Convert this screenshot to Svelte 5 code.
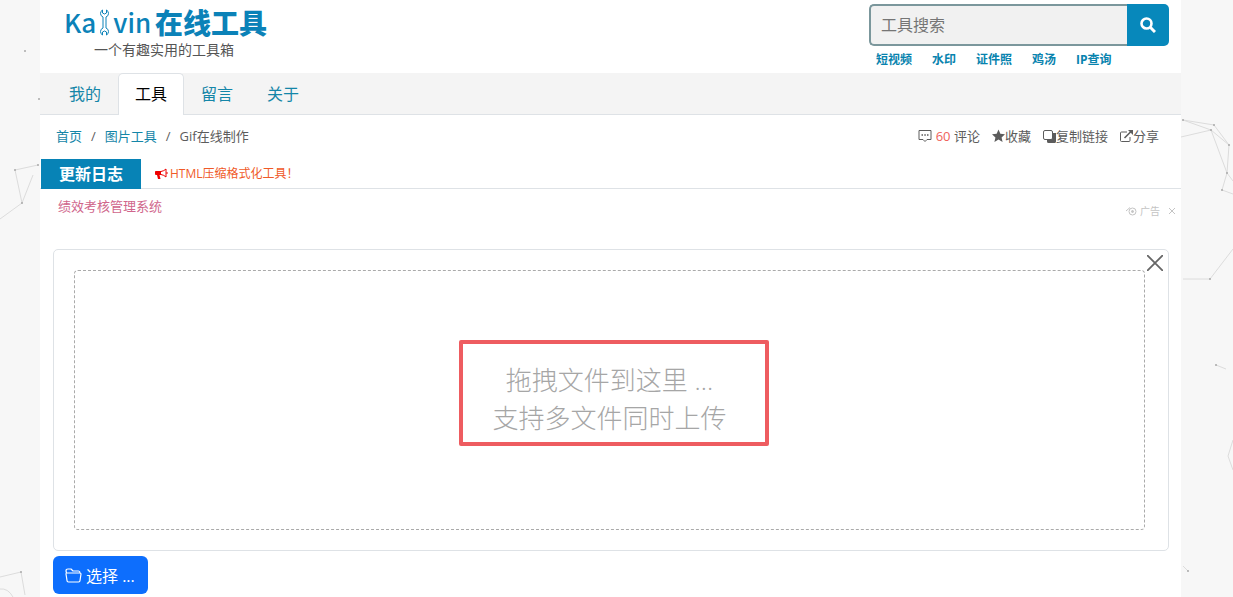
<script>
  let keyword = $state('');
  let active = $state('工具');

  const tabs = ['我的', '工具', '留言', '关于'];
  const hotLinks = ['短视频', '水印', '证件照', '鸡汤', 'IP查询'];
  const crumbs = ['首页', '图片工具'];
</script>

<svg class="particles left" width="40" height="597" viewBox="0 0 40 597" aria-hidden="true">
  <path d="M15 170L38 165M15 170L22 203L33 175M22 203L0 219M0 577L21 572L25 595M0 589Q8 588 13 597" />
  <circle cx="25" cy="51" r="1" />
  <circle cx="39" cy="99" r="1" />
  <circle cx="15" cy="170" r="1" />
  <circle cx="38" cy="165" r="1" />
  <circle cx="22" cy="203" r="1" />
  <circle cx="21" cy="572" r="1" />
</svg>
<svg class="particles right" width="52" height="597" viewBox="0 0 52 597" aria-hidden="true">
  <path d="M2 120L33 125L48 145L46 173L41 190L52 194M2 120L30 130L48 145M30 130L46 173M30 130L0 137M46 173L52 181M2 279L29 279L52 249M35 365L45 369M52 440L47 456L52 470M2 566L7 571" />
  <circle cx="2" cy="120" r="1" />
  <circle cx="33" cy="125" r="1" />
  <circle cx="30" cy="130" r="1" />
  <circle cx="48" cy="145" r="1" />
  <circle cx="46" cy="173" r="1" />
  <circle cx="41" cy="190" r="1" />
  <circle cx="29" cy="279" r="1" />
  <circle cx="35" cy="365" r="1" />
  <circle cx="7" cy="571" r="1" />
</svg>

<div class="page">
  <header>
    <a class="brand" href="#home">
      <span class="logo">
        <span class="latin">Ka</span>
        <svg width="9" height="27" viewBox="0 0 9 27">
          <path
            d="M2.500 1Q.5 2 .5 4.500Q.5 7 3 8V19Q.5 20 .5 22.500Q.5 25 2.500 26V23L4.500 22L6.500 23V26Q8.500 25 8.500 22.500Q8.500 20 6 19V8Q8.500 7 8.500 4.500Q8.500 2 6.500 1V4L4.500 5L2.500 4Z"
            fill="none"
            stroke="currentColor" />
        </svg>
        <span class="latin">vin</span>
        <span class="han">在线工具</span>
      </span>
      <span class="slogan">一个有趣实用的工具箱</span>
    </a>
    <div class="search">
      <form onsubmit={(e) => e.preventDefault()}>
        <input type="text" placeholder="工具搜索" aria-label="工具搜索" bind:value={keyword} />
        <button aria-label="搜索">
          <svg width="16" height="16" viewBox="0 0 16 16" fill="none" stroke="currentColor">
            <circle cx="6.5" cy="6.5" r="5" stroke-width="2.6" />
            <path d="M10.5 10.5L15 15" stroke-width="3" />
          </svg>
        </button>
      </form>
      <div class="hot">
        {#each hotLinks as link}
          <a href="#hot">{link}</a>
        {/each}
      </div>
    </div>
  </header>

  <nav>
    {#each tabs as tab}
      <a href="#tab" class:active={tab === active} onclick={() => (active = tab)}>{tab}</a>
    {/each}
  </nav>

  <div class="crumb-row">
    <div class="crumbs">
      {#each crumbs as crumb}
        <a href="#crumb">{crumb}</a>
        <span>/</span>
      {/each}
      <span>Gif在线制作</span>
    </div>
    <div class="actions">
      <a href="#comment">
        <svg width="14" height="14" viewBox="0 0 14 14" fill="none" stroke="currentColor">
          <path d="M1 1.5H13V10.5H9L7 12.5L5 10.5H1Z" />
          <path d="M3.5 6H5M6.3 6H7.8M9 6H10.5" stroke-width="1.4" />
        </svg>
        <span class="comment"><b>60</b> 评论</span>
      </a>
      <a href="#star">
        <svg width="13" height="14" viewBox="0 0 14 14" fill="currentColor">
          <path d="M7 0L9 4.7L14 5.2L10.3 8.5L11.4 13.5L7 10.9L2.6 13.5L3.700 8.5L0 5.2L5 4.7Z" />
        </svg>收藏
      </a>
      <a href="#copy">
        <svg width="13" height="14" viewBox="0 0 13 14">
          <path d="M4 9H9V4H13V12.500Q13 14 11.500 14H5.500Q4 14 4 12.500Z" fill="currentColor" />
          <rect x=".5" y="1.5" width="9" height="9" rx="1.5" fill="#fff" stroke="currentColor" />
        </svg>复制链接
      </a>
      <a href="#share">
        <svg width="13" height="14" viewBox="0 0 13 14" fill="none" stroke="currentColor">
          <path d="M7 3H1.5Q.5 3 .5 4V11.5Q.5 12.5 1.5 12.5H9Q10 12.5 10 11.5V8" />
          <path d="M4.5 9L11 2.5" stroke-width="1.6" />
          <path d="M8 1H13V6Z" fill="currentColor" stroke="none" />
        </svg>分享
      </a>
    </div>
  </div>

  <div class="news">
    <strong>更新日志</strong>
    <a href="#news">
      <svg width="13" height="12" viewBox="0 0 13 12">
        <path d="M0 3.500Q0 3 1 3H6V7H4.500L5.500 11H3L2 7H1Q0 7 0 6Z" fill="#e00" />
        <path d="M6 3.500Q9 3 11 1V9Q9 7 6 6.500" fill="none" stroke="#e00" />
        <path d="M12 4V6" stroke="#e00" />
      </svg>
      HTML压缩格式化工具！
    </a>
  </div>

  <div class="promo">
    <a href="#promo">绩效考核管理系统</a>
    <div class="ad">
      <svg width="12" height="10" viewBox="0 0 12 10" fill="none" stroke="currentColor">
        <circle cx="6.5" cy="5.5" r="3.5" />
        <circle cx="6.5" cy="5.5" r="1" fill="currentColor" />
        <path d="M0 5L4 1.5" />
      </svg>
      <span>广告</span>
      <button aria-label="关闭广告">
        <svg width="6" height="6" viewBox="0 0 6 6"><path d="M0 0L6 6M6 0L0 6" stroke="currentColor" /></svg>
      </button>
    </div>
  </div>

  <main>
    <div class="preview">
      <button class="close" aria-label="关闭">
        <svg width="16" height="16" viewBox="0 0 16 16"><path d="M0 0L16 16M16 0L0 16" stroke="currentColor" stroke-width="1.8" /></svg>
      </button>
      <div class="dropzone">
        <p>拖拽文件到这里 ...<br />支持多文件同时上传</p>
        <div class="highlight"></div>
      </div>
    </div>
    <button class="choose">
      <svg width="17" height="15" viewBox="0 0 17 15" fill="none" stroke="currentColor" stroke-linejoin="round">
        <path d="M1.5 5L1 3Q1 1 3 1H6L8 3H13.5Q15 3 15 5M1.5 5H15Q16 5 16 6L15 12.5Q15 14 13.5 14H3.5Q2 14 2 12.5L1 6Q1 5 1.5 5Z" stroke-width="1.2" />
      </svg>
      选择 ...
    </button>
  </main>
</div>

<style>
  :global(body) {
    background: #f7f7f7;
    font-family: 'Open Sans', 'Noto Sans CJK SC', sans-serif;
    color: #5c5c5c;
  }

  a {
    color: #1486a8;
    text-decoration: none;
  }

  button {
    font-family: inherit;
    border: 0;
    padding: 0;
    cursor: pointer;
  }

  svg {
    flex: none;
  }

  .particles {
    position: absolute;
    top: 0;
    fill: #aaa;
  }

  .particles path {
    fill: none;
    stroke: #dcdcdc;
  }

  .left {
    left: 0;
  }

  .right {
    right: 0;
  }

  .page {
    min-height: 100vh;
    margin: 0 52px 0 40px;
    background: #fff;
  }

  header {
    display: flex;
    justify-content: space-between;
    box-sizing: border-box;
    height: 73px;
    padding: 4px 12px 0 24px;
  }

  .brand {
    display: flex;
    flex-direction: column;
    color: #0b82b8;
  }

  .logo {
    display: flex;
    align-items: center;
    gap: 4px;
    height: 36px;
    font-family: 'Noto Sans CJK SC', sans-serif;
    line-height: 34px;
  }

  .latin {
    font-size: 26px;
    font-weight: 500;
  }

  .han {
    font-size: 28px;
    font-weight: 900;
    line-height: 32px;
  }

  .slogan {
    padding-left: 30px;
    font-size: 14px;
    line-height: 20px;
    color: #555;
  }

  .search {
    width: 300px;
  }

  form {
    display: flex;
    height: 42px;
  }

  input {
    flex: 1;
    min-width: 0;
    box-sizing: border-box;
    padding: 0 10px;
    border: 2px solid #7b979c;
    border-right: 0;
    border-radius: 5px 0 0 5px;
    background: #f1f1f1;
    font-family: inherit;
    font-size: 16px;
  }

  input::placeholder {
    color: #757575;
  }

  form button {
    display: flex;
    align-items: center;
    justify-content: center;
    width: 42px;
    border-radius: 0 5px 5px 0;
    background: #0788bb;
    color: #fff;
  }

  .hot {
    display: flex;
    gap: 20px;
    padding: 5px 7px;
    font-size: 12px;
    font-weight: 700;
    line-height: 18px;
  }

  .hot a {
    color: #0783ae;
  }

  nav {
    display: flex;
    padding-left: 12px;
    border-bottom: 1px solid #dee2e6;
    background: #f4f4f4;
  }

  nav a {
    height: 41px;
    padding: 0 16px;
    border: 1px solid transparent;
    border-bottom: 0;
    border-radius: 5px 5px 0 0;
    margin-bottom: -1px;
    font-size: 16px;
    line-height: 41px;
  }

  nav a.active {
    border-color: #dee2e6;
    background: #fff;
    color: #000;
  }

  .crumb-row {
    display: flex;
    justify-content: space-between;
    height: 44px;
    padding: 0 22px 0 16px;
    font-size: 13px;
    line-height: 42px;
  }

  .crumbs {
    display: flex;
    gap: 9px;
  }

  .actions {
    display: flex;
    gap: 12px;
  }

  .actions a {
    display: flex;
    align-items: center;
    height: 42px;
    color: #5c5c5c;
  }

  .comment {
    margin-left: 4px;
  }

  .comment b {
    font-weight: 400;
    color: #f0625a;
  }

  .news {
    display: flex;
    height: 29px;
    border-bottom: 1px solid #dee2e6;
    line-height: 30px;
  }

  .news strong {
    width: 100px;
    height: 30px;
    margin-left: 1px;
    background: #0783b6;
    color: #fff;
    font-size: 16px;
    text-align: center;
  }

  .news a {
    display: flex;
    align-items: center;
    gap: 2px;
    height: 30px;
    padding-left: 14px;
    color: #f05a28;
    font-size: 12px;
  }

  .promo {
    display: flex;
    justify-content: space-between;
    height: 60px;
    padding: 0 6px 0 18px;
    font-size: 13px;
    line-height: 34px;
  }

  .promo > a {
    color: #d0668c;
  }

  .ad {
    display: flex;
    align-items: center;
    gap: 2px;
    height: 44px;
    color: #c4c4c4;
    font-size: 10px;
  }

  .ad button {
    display: flex;
    margin-left: 7px;
    background: none;
    color: #c4c4c4;
  }

  main {
    padding: 0 12px 3px 13px;
  }

  .preview {
    position: relative;
    padding: 20px 23px 20px 20px;
    border: 1px solid #dee2e6;
    border-radius: 5px;
    margin-bottom: 5px;
  }

  .close {
    position: absolute;
    top: 5px;
    right: 5px;
    display: flex;
    background: none;
    color: #666;
  }

  .dropzone {
    position: relative;
    display: flex;
    align-items: center;
    justify-content: center;
    height: 258px;
    border: 1px dashed #aaa;
    border-radius: 4px;
  }

  .dropzone p {
    margin: 0 0 2px;
    color: #a6a6a6;
    font-size: 26px;
    font-weight: 300;
    line-height: 38px;
    text-align: center;
  }

  .highlight {
    position: absolute;
    top: 69px;
    left: calc(50% - 151px);
    box-sizing: border-box;
    width: 310px;
    height: 106px;
    border: 4px solid #ee5c60;
    border-radius: 2px;
  }

  .choose {
    display: flex;
    align-items: center;
    gap: 4px;
    height: 38px;
    padding: 0 13px 0 12px;
    border-radius: 6px;
    background: #0d6efd;
    color: #fff;
    font-size: 16px;
  }
</style>
